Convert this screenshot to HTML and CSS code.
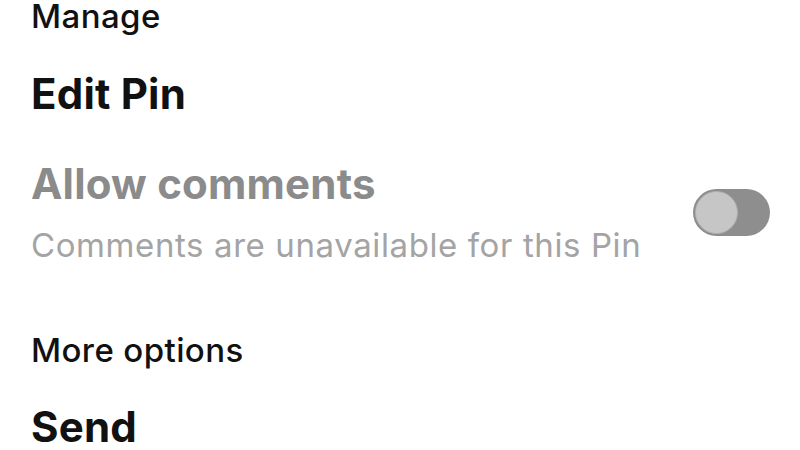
FILE: index.html
```html
<!DOCTYPE html>
<html>
<head>
<meta charset="utf-8">
<link rel="stylesheet" href="styles.css">
</head>
<body>
<div class="sheet">
  <div class="heading first">Manage</div>
  <div class="action edit">Edit Pin</div>
  <div class="toggle-row">
    <div class="toggle-text">
      <div class="action disabled">Allow comments</div>
      <div class="hint">Comments are unavailable for this Pin</div>
    </div>
    <div class="switch"><div class="knob"></div></div>
  </div>
  <div class="heading more">More options</div>
  <div class="action send">Send</div>
</div>
</body>
</html>
```
FILE: styles.css
```css
html, body {
  margin: 0;
  padding: 0;
  background: #ffffff;
  overflow: hidden;
}
body {
  font-family: Inter, "Noto Sans", sans-serif;
  color: #111111;
}
.sheet {
  width: 800px;
  height: 450px;
  padding-left: 31px;
  padding-right: 30px;
  box-sizing: border-box;
}
.heading {
  font-size: 33px;
  line-height: 40px;
  font-weight: 500;
  letter-spacing: 0.4px;
}
.first {
  line-height: 32px;
}
.action {
  font-size: 42px;
  line-height: 50px;
  font-weight: 700;
  letter-spacing: 0.2px;
}
.edit {
  margin-top: 37px;
}
.toggle-row {
  margin-top: 40px;
  display: flex;
  align-items: center;
  justify-content: space-between;
}
.disabled {
  color: #8b8b8b;
}
.hint {
  margin-top: 16px;
  font-size: 33px;
  line-height: 40px;
  color: #a4a4a4;
  letter-spacing: 0.6px;
}
.switch {
  width: 77px;
  height: 47px;
  border-radius: 24px;
  background: #8e8e8e;
  padding: 2px;
  box-sizing: border-box;
  display: flex;
  align-items: center;
  margin-top: 1px;
}
.knob {
  width: 43px;
  height: 43px;
  border-radius: 50%;
  background: #c6c6c6;
  box-sizing: border-box;
  border: 1px solid #b0b0b0;
}
.more {
  margin-top: 65px;
}
.send {
  margin-top: 36px;
  line-height: 42px;
}
```
